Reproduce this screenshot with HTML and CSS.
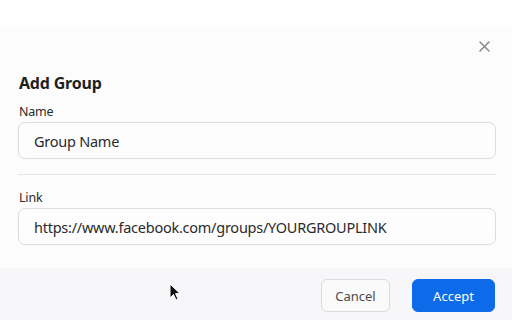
FILE: index.html
```html
<!DOCTYPE html>
<html>
<head>
<meta charset="utf-8">
<link rel="stylesheet" href="styles.css">
</head>
<body>
<div class="page">
  <div class="top"></div>
  <div class="modal">
    <div class="header">
      <button class="close" aria-label="Close">
        <svg width="11" height="11" viewBox="0 0 11 11"><path d="M1 1L10 10M10 1L1 10" stroke="#8a8a8a" stroke-width="1.5" stroke-linecap="round"/></svg>
      </button>
    </div>
    <div class="body">
      <h2 class="title">Add Group</h2>
      <label class="label">Name</label>
      <div class="input">Group Name</div>
      <hr class="divider">
      <label class="label">Link</label>
      <div class="input">https://www.facebook.com/groups/YOURGROUPLINK</div>
    </div>
    <div class="footer">
      <button class="btn btn-cancel">Cancel</button>
      <button class="btn btn-accept">Accept</button>
    </div>
  </div>
  <svg class="cursor" width="12" height="18" viewBox="0 0 12 18"><path d="M1 1L1 15L4.5 11.5L7 17L9 16L6.6 10.6L11 10.6Z" fill="#111" stroke="#fff" stroke-width="1"/></svg>
</div>
</body>
</html>
```

FILE: styles.css
```css
html, body {
  margin: 0;
  padding: 0;
  background: #ffffff;
}
body {
  font-family: "Noto Sans", "Open Sans", sans-serif;
  color: #222;
}
.page {
  position: relative;
  width: 512px;
  height: 320px;
  overflow: hidden;
  display: flex;
  flex-direction: column;
}
.top {
  height: 27px;
  background: #ffffff;
}
.modal {
  flex: 1;
  display: flex;
  flex-direction: column;
  background: #fcfcfc;
}
.header {
  display: flex;
  justify-content: flex-end;
  padding: 12px 21px 0 18px;
  height: 29px;
}
.close {
  width: 14px;
  height: 14px;
  padding: 0;
  border: none;
  background: transparent;
  display: flex;
  align-items: center;
  justify-content: center;
}
.body {
  padding: 0 16px 0 18px;
  display: flex;
  flex-direction: column;
  height: 200px;
}
.title {
  margin: 4px 0 0 1px;
  font-size: 16px;
  line-height: 22px;
  font-weight: 700;
  letter-spacing: -0.2px;
  color: #1f1f1f;
}
.label {
  margin-top: 9px;
  margin-left: 1px;
  font-size: 12.5px;
  line-height: 18px;
  letter-spacing: -0.2px;
  color: #2a2a2a;
}
.input {
  margin-top: 1px;
  height: 37px;
  box-sizing: border-box;
  border: 1px solid #dcdcdc;
  border-radius: 7px;
  background: #fdfdfd;
  padding: 0 15px;
  display: flex;
  align-items: center;
  font-size: 14.5px;
  letter-spacing: -0.25px;
  color: #2b2b2b;
}
.divider {
  margin: 15px 0 0 0;
  border: none;
  border-top: 1px solid #e6e6e6;
  height: 0;
}
.divider + .label {
  margin-top: 14px;
}
.footer {
  flex: 1;
  background: #f7f7f9;
  display: flex;
  justify-content: flex-end;
  align-items: flex-start;
  gap: 22px;
  padding: 11px 17px 0 0;
}
.btn {
  height: 33px;
  box-sizing: border-box;
  border-radius: 6px;
  font-family: inherit;
  font-size: 13px;
  padding: 0;
}
.btn-cancel {
  width: 69px;
  border: 1px solid #dadada;
  background: #fafafa;
  color: #4a4a4a;
}
.btn-accept {
  width: 83px;
  border: 1px solid #0d6bea;
  background: #0d6bea;
  color: #ffffff;
}
.cursor {
  position: absolute;
  left: 169px;
  top: 283px;
}
```
